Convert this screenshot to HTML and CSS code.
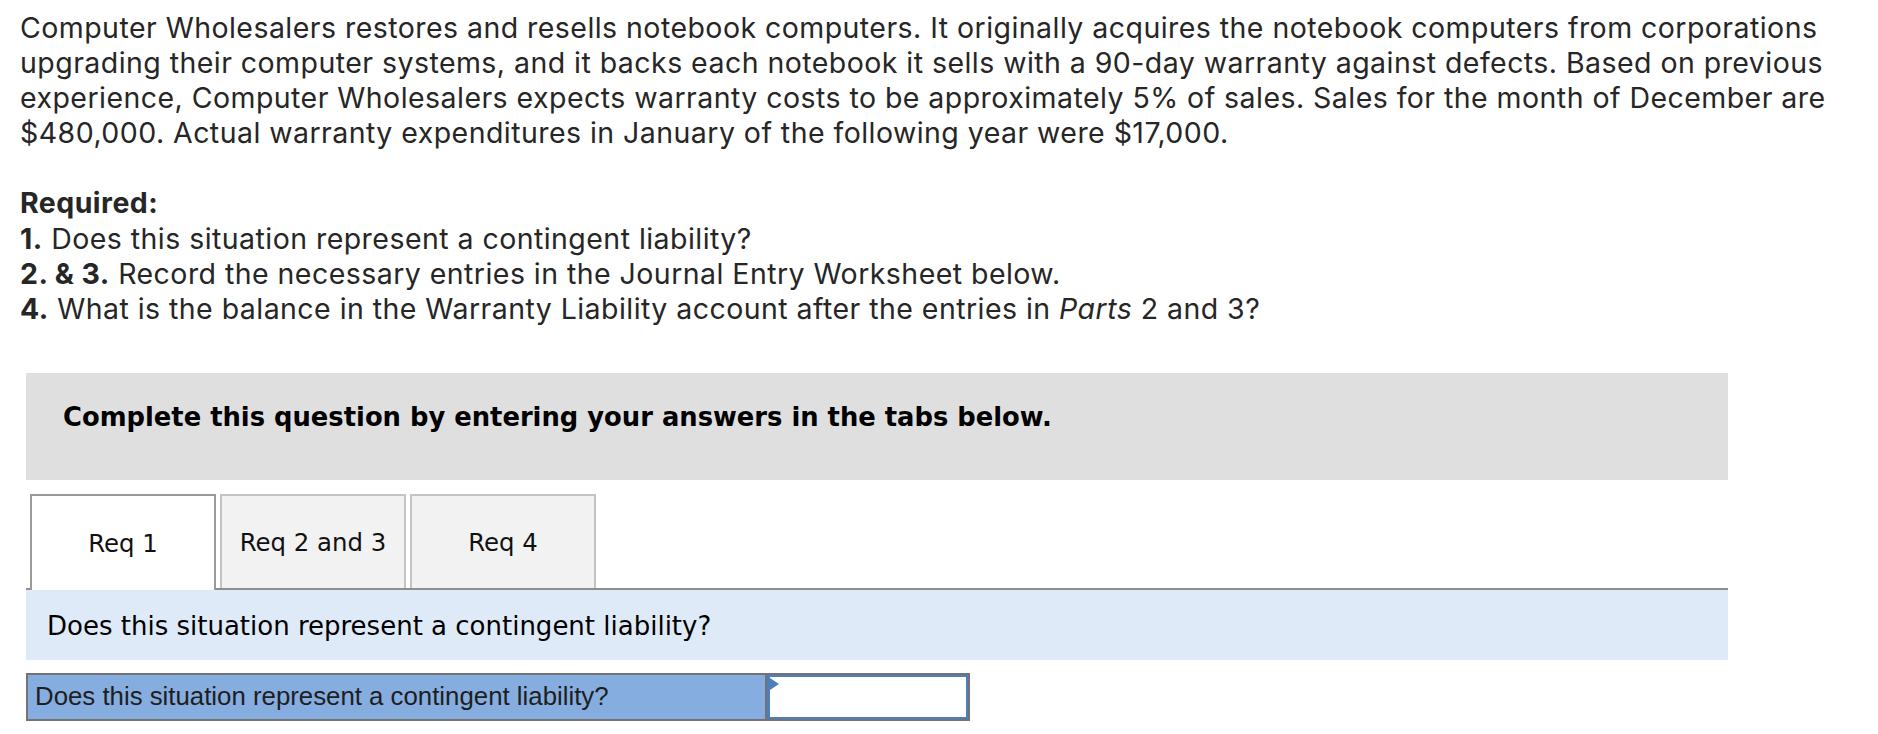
FILE: index.html
```html
<!DOCTYPE html>
<html lang="en">
<head>
<meta charset="utf-8">
<title>Warranty Liability</title>
<link rel="stylesheet" href="styles.css">
</head>
<body>
<div class="problem">
  <p class="intro">Computer Wholesalers restores and resells notebook computers. It originally acquires the notebook computers from corporations<br>upgrading their computer systems, and it backs each notebook it sells with a 90-day warranty against defects. Based on previous<br>experience, Computer Wholesalers expects warranty costs to be approximately 5% of sales. Sales for the month of December are<br>$480,000. Actual warranty expenditures in January of the following year were $17,000.</p>
  <p class="required"><b>Required:</b><br><b>1.</b> Does this situation represent a contingent liability?<br><b>2. &amp; 3.</b> Record the necessary entries in the Journal Entry Worksheet below.<br><b>4.</b> What is the balance in the Warranty Liability account after the entries in <i>Parts</i> 2 and 3?</p>
</div>

<div class="instructions">Complete this question by entering your answers in the tabs below.</div>

<div class="tabs">
  <div class="tab active">Req 1</div>
  <div class="tab">Req 2 and 3</div>
  <div class="tab">Req 4</div>
</div>

<div class="question">Does this situation represent a contingent liability?</div>

<div class="answer-row">
  <div class="answer-label">Does this situation represent a contingent liability?</div>
  <div class="answer-cell">
    <div class="answer-input"><span class="flag"></span></div>
  </div>
</div>
</body>
</html>
```

FILE: styles.css
```css
html, body {
  margin: 0;
  padding: 0;
  background: #ffffff;
}

body {
  width: 1878px;
}

.problem {
  padding: 10px 20px 0 20px;
  font-family: "Inter", "Open Sans", sans-serif;
  font-size: 28.5px;
  letter-spacing: 0.45px;
  line-height: 35.1px;
  color: #262626;
}

.problem p {
  margin: 0;
  white-space: nowrap;
}

.problem .required {
  margin-top: 35.1px;
}

.problem b {
  font-weight: 700;
}

.instructions {
  margin: 47px 0 0 26px;
  width: 1702px;
  height: 107px;
  box-sizing: border-box;
  padding: 29px 0 0 37px;
  background: #dfdfdf;
  font-family: "DejaVu Sans", Verdana, sans-serif;
  font-weight: bold;
  font-size: 25.8px;
  line-height: 30px;
  color: #000;
}

.tabs {
  margin: 14px 0 0 26px;
  width: 1702px;
  padding-left: 4px;
  box-sizing: border-box;
  display: flex;
  align-items: flex-end;
  gap: 4px;
  border-bottom: 2px solid #8f8f8f;
}

.tab {
  width: 186px;
  height: 94px;
  box-sizing: border-box;
  border: 2px solid #c4c4c4;
  border-bottom: none;
  background: #f2f2f2;
  display: flex;
  align-items: center;
  justify-content: center;
  font-family: "DejaVu Sans", Verdana, sans-serif;
  font-size: 24.4px;
  color: #111;
  padding-top: 2px;
}

.tab.active {
  height: 96px;
  margin-bottom: -2px;
  border-color: #999999;
  background: #ffffff;
}

.question {
  margin-left: 26px;
  width: 1702px;
  height: 70px;
  box-sizing: border-box;
  padding: 21px 0 0 21px;
  background: #deeaf7;
  font-family: "DejaVu Sans", Verdana, sans-serif;
  font-size: 26px;
  line-height: 30px;
  color: #000;
}

.answer-row {
  margin: 13px 0 0 26px;
  width: 944px;
  height: 48px;
  box-sizing: border-box;
  border: 2px solid #737373;
  display: flex;
}

.answer-label {
  flex: 1;
  background: #85addf;
  padding-left: 7px;
  display: flex;
  align-items: center;
  font-family: "Liberation Sans", Arial, sans-serif;
  font-size: 25.8px;
  color: #1e1e1e;
  white-space: nowrap;
}

.answer-cell {
  width: 201px;
  border-left: 2px solid #737373;
  display: flex;
}

.answer-input {
  flex: 1;
  border: 2px solid #4e7fbd;
  border-left-width: 3px;
  background: #ffffff;
  position: relative;
}

.flag {
  position: absolute;
  left: 0;
  top: 1px;
  width: 0;
  height: 0;
  border-top: 6px solid transparent;
  border-bottom: 6px solid transparent;
  border-left: 9px solid #4e7fbd;
}
```
